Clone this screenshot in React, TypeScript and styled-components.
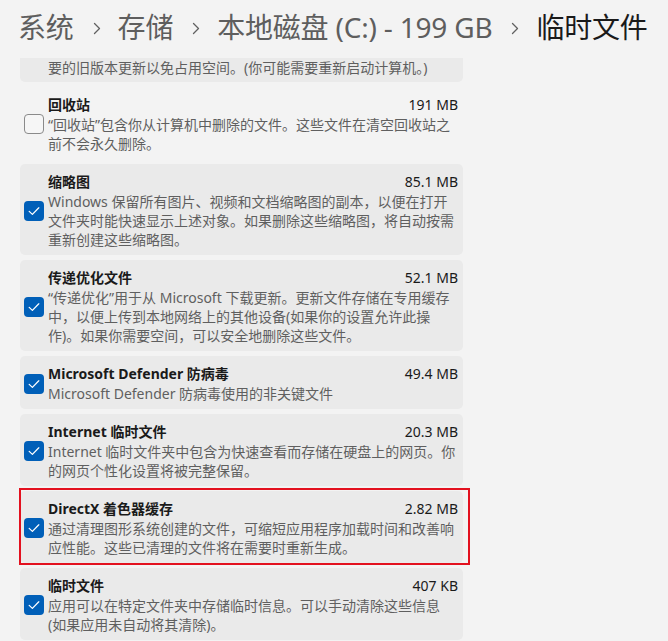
import React from "react";
import styled, { createGlobalStyle } from "styled-components";

const Global = createGlobalStyle`
  html, body { margin: 0; padding: 0; background: #f3f3f3; }
  body { font-family: "Noto Sans", "Noto Sans CJK SC", sans-serif; color: #1b1b1b; }
`;

const Page = styled.div`
  width: 668px;
  height: 641px;
  overflow: hidden;
  background: #f3f3f3;
  display: flex;
  flex-direction: column;
`;

const Header = styled.div`
  height: 58px;
  flex: none;
  display: flex;
  align-items: center;
  padding: 0 0 4px 18px;
  box-sizing: border-box;
  gap: 0;
`;

const Crumb = styled.span<{ $current?: boolean }>`
  font-size: 28px;
  line-height: 36px;
  color: ${(p) => (p.$current ? "#1a1a1a" : "#5e5e5e")};
  white-space: nowrap;
  letter-spacing: -0.2px;
`;

const Sep = styled.span`
  display: flex;
  align-items: center;
  padding: 2px 17px 0 19px;
`;

const List = styled.div`
  display: flex;
  flex-direction: column;
  gap: 5px;
  width: 443px;
  margin-left: 20px;
`;

const Card = styled.div<{ $plain?: boolean; $partial?: boolean; $highlight?: boolean }>`
  position: relative;
  display: flex;
  align-items: center;
  gap: 4px;
  padding: ${(p) => (p.$partial ? "0 5px 5px 28px" : "8px 5px 6px 4px")};
  background: ${(p) => (p.$plain ? "transparent" : "#eaeaea")};
  border-radius: ${(p) => (p.$partial ? "0 0 5px 5px" : "5px")};
  ${(p) =>
    p.$highlight &&
    `
    &::after {
      content: "";
      position: absolute;
      left: -1px;
      right: -7px;
      top: -3px;
      bottom: -2px;
      border: 2px solid #e3111f;
      pointer-events: none;
    }
  `}
`;

const Box = styled.div<{ $checked: boolean }>`
  flex: none;
  width: 20px;
  height: 20px;
  box-sizing: border-box;
  border-radius: 4px;
  display: flex;
  align-items: center;
  justify-content: center;
  background: ${(p) => (p.$checked ? "#005fb8" : "#f6f6f6")};
  border: ${(p) => (p.$checked ? "none" : "1px solid #8a8a8a")};
`;

const Body = styled.div`
  flex: 1;
  min-width: 0;
  display: flex;
  flex-direction: column;
`;

const TitleRow = styled.div`
  display: flex;
  justify-content: space-between;
  align-items: center;
  font-size: 14px;
  line-height: 20px;
`;

const Title = styled.span`
  font-weight: 700;
  color: #1a1a1a;
`;

const Size = styled.span`
  color: #1a1a1a;
`;

const Line = styled.div`
  font-size: 14px;
  line-height: 19px;
  color: #5f5f5f;
  white-space: nowrap;
`;

const Chevron = () => (
  <svg width="8" height="13" viewBox="0 0 8 13">
    <path d="M1.5 1.5 L6.5 6.5 L1.5 11.5" fill="none" stroke="#606060" strokeWidth="1.3" strokeLinecap="round" strokeLinejoin="round" />
  </svg>
);

const Check = ({ checked }: { checked: boolean }) => (
  <Box $checked={checked}>
    {checked && (
      <svg width="20" height="20" viewBox="0 0 20 20">
        <path d="M5.2 10.4 L8.4 13.4 L14.8 6.8" fill="none" stroke="#ffffff" strokeWidth="1.25" strokeLinecap="round" strokeLinejoin="round" />
      </svg>
    )}
  </Box>
);

type Item = {
  title: string;
  size: string;
  lines: string[];
  checked: boolean;
  plain?: boolean;
  highlight?: boolean;
};

const items: Item[] = [
  {
    title: "回收站",
    size: "191 MB",
    checked: false,
    plain: true,
    lines: ["“回收站”包含你从计算机中删除的文件。这些文件在清空回收站之", "前不会永久删除。"],
  },
  {
    title: "缩略图",
    size: "85.1 MB",
    checked: true,
    lines: [
      "Windows 保留所有图片、视频和文档缩略图的副本，以便在打开",
      "文件夹时能快速显示上述对象。如果删除这些缩略图，将自动按需",
      "重新创建这些缩略图。",
    ],
  },
  {
    title: "传递优化文件",
    size: "52.1 MB",
    checked: true,
    lines: [
      "“传递优化”用于从 Microsoft 下载更新。更新文件存储在专用缓存",
      "中，以便上传到本地网络上的其他设备(如果你的设置允许此操",
      "作)。如果你需要空间，可以安全地删除这些文件。",
    ],
  },
  {
    title: "Microsoft Defender 防病毒",
    size: "49.4 MB",
    checked: true,
    lines: ["Microsoft Defender 防病毒使用的非关键文件"],
  },
  {
    title: "Internet 临时文件",
    size: "20.3 MB",
    checked: true,
    lines: ["Internet 临时文件夹中包含为快速查看而存储在硬盘上的网页。你", "的网页个性化设置将被完整保留。"],
  },
  {
    title: "DirectX 着色器缓存",
    size: "2.82 MB",
    checked: true,
    highlight: true,
    lines: ["通过清理图形系统创建的文件，可缩短应用程序加载时间和改善响", "应性能。这些已清理的文件将在需要时重新生成。"],
  },
  {
    title: "临时文件",
    size: "407 KB",
    checked: true,
    lines: ["应用可以在特定文件夹中存储临时信息。可以手动清除这些信息", "(如果应用未自动将其清除)。"],
  },
];

export default function App() {
  return (
    <Page>
      <Global />
      <Header>
        <Crumb>系统</Crumb>
        <Sep><Chevron /></Sep>
        <Crumb>存储</Crumb>
        <Sep><Chevron /></Sep>
        <Crumb>本地磁盘 (C:) - 199 GB</Crumb>
        <Sep><Chevron /></Sep>
        <Crumb $current>临时文件</Crumb>
      </Header>
      <List>
        <Card $partial>
          <Body>
            <Line>要的旧版本更新以免占用空间。(你可能需要重新启动计算机。)</Line>
          </Body>
        </Card>
        {items.map((it) => (
          <Card key={it.title} $plain={it.plain} $highlight={it.highlight}>
            <Check checked={it.checked} />
            <Body>
              <TitleRow>
                <Title>{it.title}</Title>
                <Size>{it.size}</Size>
              </TitleRow>
              {it.lines.map((l) => (
                <Line key={l}>{l}</Line>
              ))}
            </Body>
          </Card>
        ))}
      </List>
    </Page>
  );
}
